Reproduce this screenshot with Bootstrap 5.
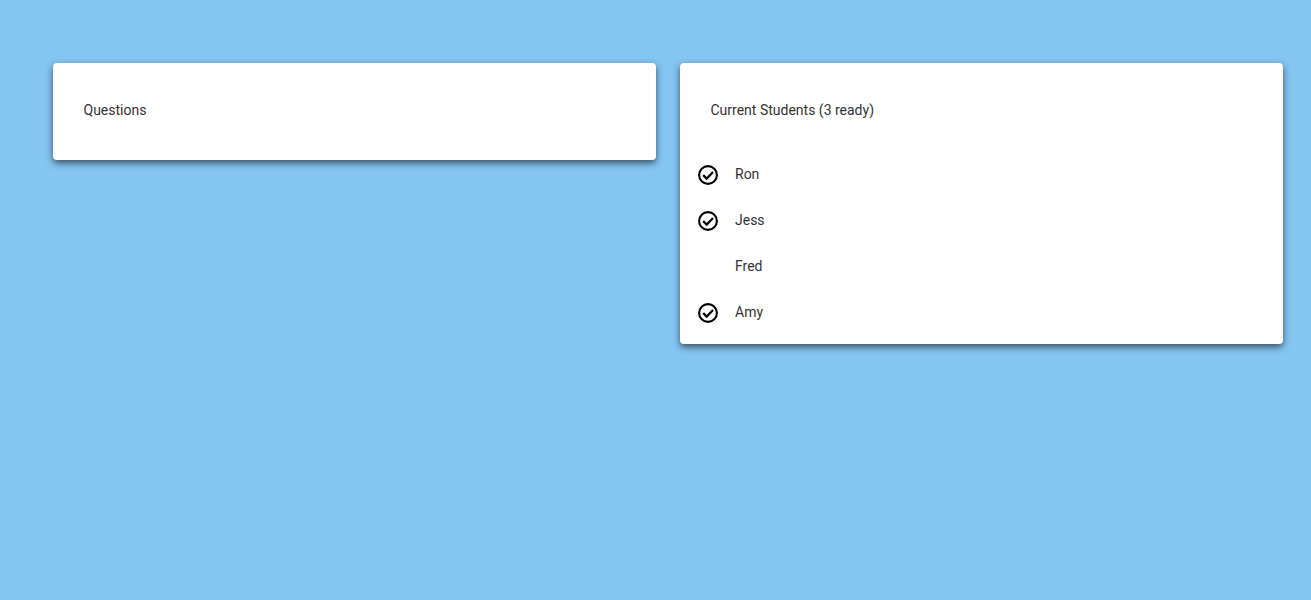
<!DOCTYPE html>
<html lang="en">
<head>
    <meta charset="UTF-8">
    <meta name="viewport" content="width=device-width, initial-scale=1.0">
    <title>Students</title>
    <link rel="stylesheet" href="https://cdn.jsdelivr.net/npm/bootstrap@5.3.0/dist/css/bootstrap.min.css">
    <style>
        body {
            background: #85c5f2;
            font-family: Roboto, "Liberation Sans", sans-serif;
            font-size: 14px;
            color: #333;
            min-height: 600px;
        }
        .board {
            padding: 63px 28px 0 53px;
            gap: 24px;
        }
        .panel {
            flex: 0 0 603px;
            border: 0;
            border-radius: 4px;
            box-shadow: 0 3px 7px rgba(0, 0, 0, .6);
        }
        .panel-title {
            padding: 37px 30.5px 40px;
            line-height: 20px;
        }
        .panel-title.has-list {
            padding-bottom: 31px;
        }
        .student-list {
            padding-bottom: 9px;
        }
        .student {
            height: 46px;
            padding-left: 17px;
            gap: 16px;
            border: 0;
            background: transparent;
            color: #333;
        }
        .student-icon {
            width: 22px;
            height: 22px;
            flex: none;
        }
    </style>
</head>
<body>
    <div class="d-flex align-items-start board">
        <div class="card panel">
            <div class="panel-title">Questions</div>
        </div>
        <div class="card panel">
            <div class="panel-title has-list">Current Students (3 ready)</div>
            <ul class="list-group list-group-flush student-list">
                <li class="list-group-item d-flex align-items-center student">
                    <svg class="student-icon" viewBox="0 0 22 22"><circle cx="11" cy="12" r="8.9" fill="none" stroke="#000" stroke-width="2.1"/><path d="M6.2 12.1l3.5 3.5 6.3-6.5" fill="none" stroke="#000" stroke-width="2.2"/></svg>
                    <span>Ron</span>
                </li>
                <li class="list-group-item d-flex align-items-center student">
                    <svg class="student-icon" viewBox="0 0 22 22"><circle cx="11" cy="12" r="8.9" fill="none" stroke="#000" stroke-width="2.1"/><path d="M6.2 12.1l3.5 3.5 6.3-6.5" fill="none" stroke="#000" stroke-width="2.2"/></svg>
                    <span>Jess</span>
                </li>
                <li class="list-group-item d-flex align-items-center student">
                    <span class="student-icon"></span>
                    <span>Fred</span>
                </li>
                <li class="list-group-item d-flex align-items-center student">
                    <svg class="student-icon" viewBox="0 0 22 22"><circle cx="11" cy="12" r="8.9" fill="none" stroke="#000" stroke-width="2.1"/><path d="M6.2 12.1l3.5 3.5 6.3-6.5" fill="none" stroke="#000" stroke-width="2.2"/></svg>
                    <span>Amy</span>
                </li>
            </ul>
        </div>
    </div>
    <script src="https://cdn.jsdelivr.net/npm/bootstrap@5.3.0/dist/js/bootstrap.bundle.min.js"></script>
</body>
</html>
